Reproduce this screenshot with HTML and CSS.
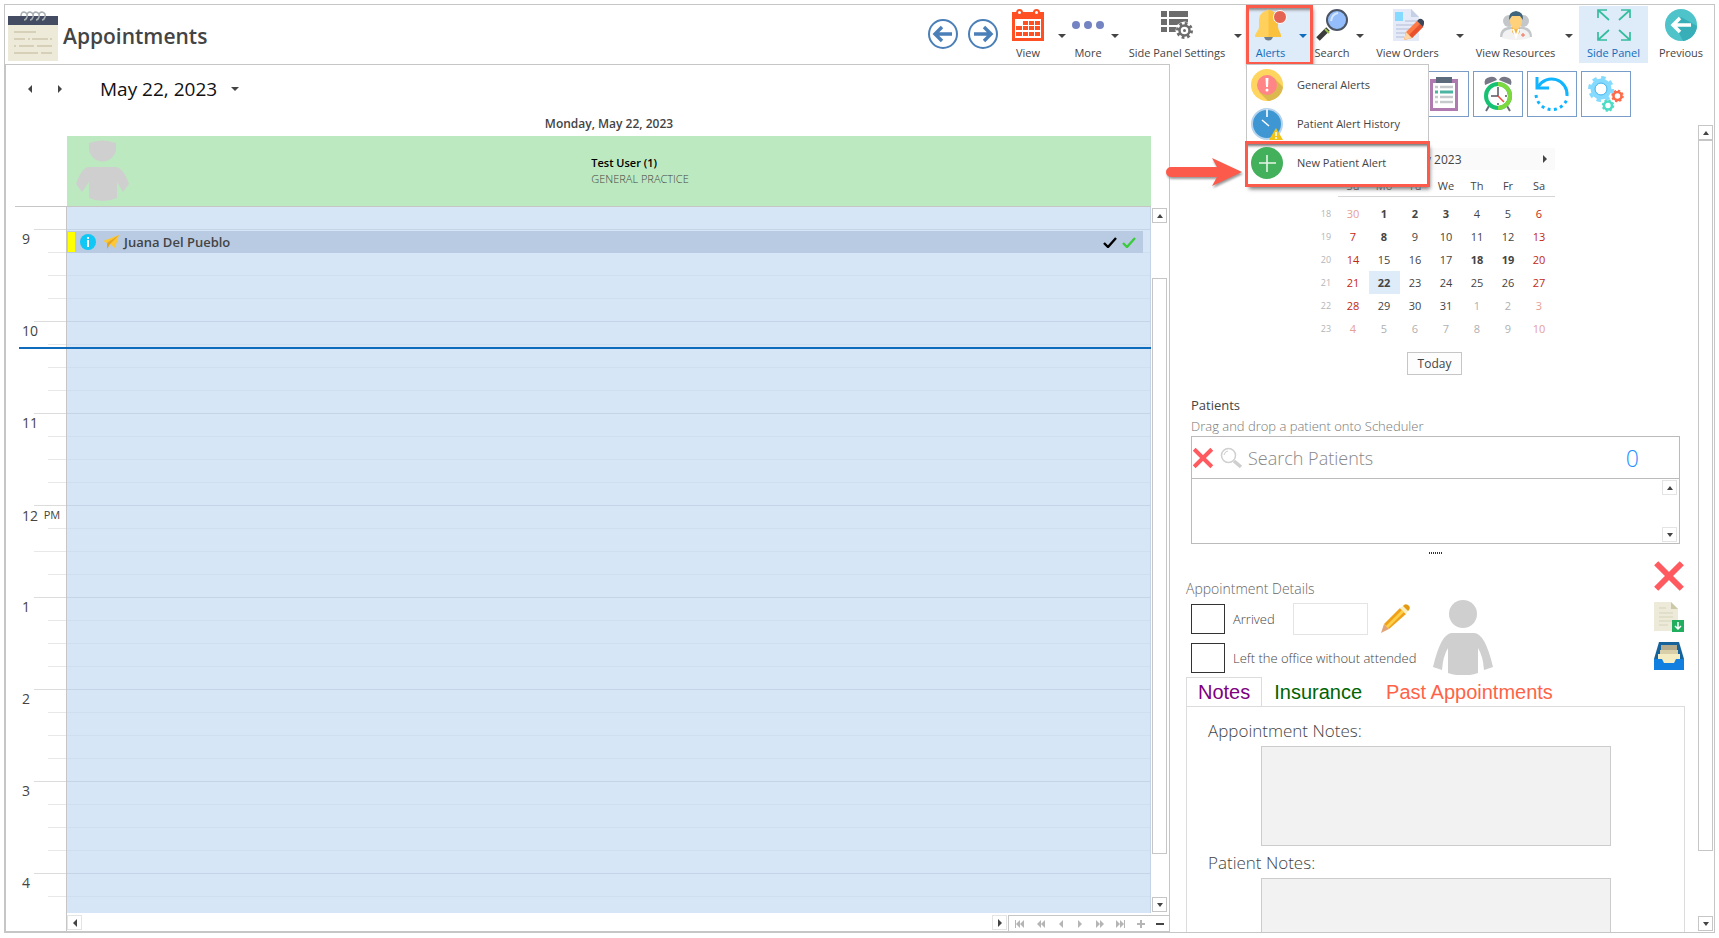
FILE: index.html
```html
<!DOCTYPE html>
<html lang="en">
<head>
    <meta charset="utf-8">
    <title>Appointments</title>
    <link rel="stylesheet" href="styles.css">
</head>
<body>
    <svg class="defs" aria-hidden="true">
        <symbol id="up" viewBox="0 0 8 8"><path d="M4 2l3 4H1z"/></symbol>
        <symbol id="down" viewBox="0 0 8 8"><path d="M4 6L1 2h6z"/></symbol>
        <symbol id="left" viewBox="0 0 8 8"><path d="M2 4l4-4v8z"/></symbol>
        <symbol id="right" viewBox="0 0 8 8"><path d="M6 4L2 0v8z"/></symbol>
        <symbol id="caret" viewBox="0 0 8 4"><path d="M0 0h8L4 4z"/></symbol>
        <symbol id="cross" viewBox="0 0 30 30"><path d="M3 3l24 24M27 3L3 27" fill="none" stroke="#ff5a5f" stroke-width="5.5"/></symbol>
        <symbol id="check" viewBox="0 0 14 11"><path d="M1 6l4 4 8-9" fill="none" stroke="currentColor" stroke-width="2.4"/></symbol>
    </svg>

    <div class="app">
        <header class="header">
            <div class="brand">
                <svg width="50" height="50" viewBox="0 0 50 50">
                    <path d="M0 5h50v45H0z" fill="#edead9"/>
                    <path d="M0 5h50v9H0z" fill="#434c62"/>
                    <g fill="none" stroke="#a9b0b5" stroke-width="1.5">
                        <path d="M13 5q0-4 3-4 4 1 3 5-1 3-3 3M19 5q0-4 3-4 4 1 3 5-1 3-3 3M25 5q0-4 3-4 4 1 3 5-1 3-3 3M31 5q0-4 3-4 4 1 3 5-1 3-3 3"/>
                    </g>
                    <path d="M6 21h22M6 28h11M20 28h2M24 28h16M42 28h2M6 35h2M11 35h15M29 35h15M6 42h24M33 42h11" stroke="#cfc8ae" stroke-width="1.6"/>
                </svg>
                <h1>Appointments</h1>
            </div>
            <nav class="toolbar">
                <button class="round" aria-label="Back">
                    <svg width="32" height="32" viewBox="0 0 32 32" fill="none" stroke="#4a7fb8"><circle cx="16" cy="16" r="14" stroke-width="2"/><path d="M25 16H9M15 9l-7 7 7 7" stroke-width="3.4"/></svg>
                </button>
                <button class="round" aria-label="Forward">
                    <svg width="32" height="32" viewBox="0 0 32 32" fill="none" stroke="#4a7fb8"><circle cx="16" cy="16" r="14" stroke-width="2"/><path d="M7 16h16M17 9l7 7-7 7" stroke-width="3.4"/></svg>
                </button>
                <button class="tool">
                    <svg width="32" height="32" viewBox="0 0 32 32">
                        <path d="M0 3h32v29H0z" fill="#ff5023"/>
                        <path d="M3 10h26v19H3z" fill="#fff"/>
                        <path d="M11 12h5v4h-5zM17 12h5v4h-5zM23 12h5v4h-5zM4 17h6v4H4zM11 17h5v4h-5zM17 17h5v4h-5zM23 17h5v4h-5zM4 23h6v4H4zM11 23h5v4h-5zM17 23h5v4h-5zM23 23h5v4h-5z" fill="#ff5023"/>
                        <circle cx="7.500" cy="3.500" r="2.500" fill="#fff" stroke="#ff5023" stroke-width="2"/>
                        <circle cx="24.500" cy="3.500" r="2.500" fill="#fff" stroke="#ff5023" stroke-width="2"/>
                    </svg>
                    <span>View</span>
                </button>
                <button class="drop" aria-label="View options"><svg width="8" height="4"><use href="#caret"/></svg></button>
                <button class="tool">
                    <svg width="32" height="32" viewBox="0 0 32 32" fill="#7484c2"><circle cx="4" cy="16" r="4"/><circle cx="16" cy="16" r="4"/><circle cx="28" cy="16" r="4"/></svg>
                    <span>More</span>
                </button>
                <button class="drop" aria-label="More options"><svg width="8" height="4"><use href="#caret"/></svg></button>
                <button class="tool">
                    <svg width="32" height="32" viewBox="0 0 32 32">
                        <path d="M0 2h6v6H0zM8 2h19v6H8zM0 10h6v6H0zM8 10h19v6H8zM0 18h6v5H0zM8 18h9v5H8z" fill="#6c6c6c"/>
                        <circle cx="23.500" cy="21.500" r="9" fill="#fff"/>
                        <circle cx="23.500" cy="21.500" r="7" fill="none" stroke="#6c6c6c" stroke-width="3" stroke-dasharray="2.750 2.750"/>
                        <circle cx="23.500" cy="21.500" r="5" fill="none" stroke="#6c6c6c" stroke-width="2.500"/>
                        <circle cx="23.500" cy="21.500" r="1.500" fill="#6c6c6c"/>
                    </svg>
                    <span>Side Panel Settings</span>
                </button>
                <button class="drop" aria-label="Side panel options"><svg width="8" height="4"><use href="#caret"/></svg></button>

                <div class="alerts">
                    <button class="tool">
                        <svg width="32" height="32" viewBox="0 0 32 32">
                            <path d="M9 27h9a4.500 4.500 0 0 1-9 0z" fill="#6f7f8c"/>
                            <path d="M11 2a3 3 0 0 1 5 0c5 1 7 5 7 10v6c0 4 3 5 3 10H0c0-5 4-6 4-10v-6c0-5 2-9 7-10z" fill="#ffd15c"/>
                            <path d="M13.500 1q2 0 2.500 1c5 1 7 5 7 10v6c0 4 3 5 3 10H13.500z" fill="#f9c13e"/>
                            <circle cx="25" cy="8" r="6.500" fill="#e56353" stroke="#fff" stroke-width="1"/>
                        </svg>
                        <span>Alerts</span>
                    </button>
                    <button class="drop" aria-label="Alert options" aria-expanded="true"><svg width="8" height="4"><use href="#caret"/></svg></button>
                    <div class="menu">
                        <button>
                            <svg width="32" height="32" viewBox="0 0 32 32"><circle cx="16" cy="16" r="16" fill="#fdd55f"/><path d="M23 9l9 9a16 16 0 0 1-15 14l-9-9z" fill="#dcb94f"/><circle cx="16" cy="16" r="10" fill="#ff8587"/><path d="M14.500 9h3l-.5 9h-2z" fill="#fff"/><circle cx="16" cy="21" r="1.500" fill="#fff"/></svg>
                            General Alerts
                        </button>
                        <button>
                            <svg width="32" height="32" viewBox="0 0 32 32"><circle cx="16" cy="16" r="15" fill="#3e97d3" stroke="#b5d3ec" stroke-width="2"/><path d="M16 1v8" stroke="#d8e9f7" stroke-width="2"/><path d="M11 12l7 6" stroke="#fff" stroke-width="1.500"/><path d="M25 20l7 12H18z" fill="#f0c419"/><path d="M25 24v4M25 29v2" stroke="#fff" stroke-width="1.500"/></svg>
                            Patient Alert History
                        </button>
                        <button class="marked">
                            <svg width="32" height="32" viewBox="0 0 32 32"><circle cx="16" cy="16" r="16" fill="#43b05c"/><path d="M16 8v17M8 16h17" stroke="#e5f5e8" stroke-width="1.600"/></svg>
                            New Patient Alert
                        </button>
                        <svg class="pointer" width="80" height="32" viewBox="0 0 80 32"><path d="M6 10h46L47 1l30 14-30 14 5-9H6a5 5 0 0 1 0-10z" fill="#fc5a4b"/></svg>
                    </div>
                </div>

                <button class="tool">
                    <svg width="32" height="32" viewBox="0 0 32 32"><path d="M2 30l10-10" stroke="#3c3c3c" stroke-width="5"/><path d="M9 20l4 4" stroke="#9bc24a" stroke-width="2"/><circle cx="21" cy="11" r="10" fill="#94befb" stroke="#4b5563" stroke-width="2"/><path d="M15 12q1-7 7-8" fill="none" stroke="#d5e6ff" stroke-width="2"/></svg>
                    <span>Search</span>
                </button>
                <button class="drop" aria-label="Search options"><svg width="8" height="4"><use href="#caret"/></svg></button>
                <button class="tool">
                    <svg width="32" height="32" viewBox="0 0 32 32"><path d="M1 0h18l8 8v24H1z" fill="#e4eaf8"/><path d="M19 0l8 8h-8z" fill="#c5d0e6"/><path d="M3 3h8v9H3z" fill="#84dbff"/><path d="M13 12h12M4 16h20M4 20h15M4 24h10M4 28h8" stroke="#c3ccdf" stroke-width="1.500"/><path d="M12 31l2-8 11-11 6 6-11 11z" fill="#ff7a45"/><path d="M17 26l11-11 3 3-11 11z" fill="#e8502e"/><path d="M25 12l2-2q2-1 4 1t1 4l-1 3z" fill="#3d4757"/><path d="M12 31l2-8 6 6z" fill="#fbd7a5"/></svg>
                    <span>View Orders</span>
                </button>
                <button class="drop" aria-label="Order options"><svg width="8" height="4"><use href="#caret"/></svg></button>
                <button class="tool">
                    <svg width="32" height="32" viewBox="0 0 32 32"><g fill="#c3c7ca"><circle cx="9" cy="12" r="6"/><circle cx="23" cy="12" r="6"/><path d="M0 28q0-9 8-10h16q8 1 8 10z"/></g><path d="M2 29q0-8 9-9h11q8 1 8 9-14 4-28 0z" fill="#f2f2f2"/><path d="M12 17h8v6l-4 5-4-5z" fill="#f4b548"/><ellipse cx="16" cy="12" rx="6" ry="8" fill="#ffd17b"/><path d="M9 11q-1-8 7-9 8 1 7 9l-3-4h-8z" fill="#41657c"/><path d="M13 20l3 8 3-8" fill="none" stroke="#fff" stroke-width="2"/><path d="M23 24v4M21 26h4" stroke="#f06c55"/></svg>
                    <span>View Resources</span>
                </button>
                <button class="drop" aria-label="Resource options"><svg width="8" height="4"><use href="#caret"/></svg></button>
                <button class="tool active">
                    <svg width="34" height="32" viewBox="0 0 34 32" fill="none" stroke="#35bd9f" stroke-width="1.700"><path d="M1 9V1h9M1 1l11 10M24 1h9v8M33 1L22 11M1 23v8h9M1 31l11-10M24 31h9v-8M33 31L22 21"/></svg>
                    <span>Side Panel</span>
                </button>
                <button class="tool">
                    <svg width="32" height="32" viewBox="0 0 32 32"><circle cx="16" cy="16" r="16" fill="#4ec3c9"/><path d="M16 8l16 9a16 16 0 0 1-14 15l-8-16z" fill="#38afb8"/><path d="M26 16H9M15 9l-7 7 7 7" fill="none" stroke="#fff" stroke-width="3.500"/></svg>
                    <span>Previous</span>
                </button>
            </nav>
        </header>

        <main class="main">
            <section class="schedule">
                <div class="datebar">
                    <button aria-label="Previous day"><svg width="8" height="8"><use href="#left"/></svg></button>
                    <button aria-label="Next day"><svg width="8" height="8"><use href="#right"/></svg></button>
                    <button class="date">May 22, 2023 <svg width="8" height="4"><use href="#caret"/></svg></button>
                </div>
                <div class="dayname">Monday, May 22, 2023</div>
                <div class="resource">
                    <div class="resource-card">
                        <svg width="54" height="62" viewBox="0 0 54 62" fill="#cfcfcf"><path d="M14 3q13-5 27 0v5a13.500 13.500 0 0 1-27 0z"/><path d="M14 27h26q8 0 14 17l-6 8-6-10v16q-14 6-28 0V42L7 52 1 44q6-17 13-17z"/></svg>
                        <div class="resource-name">
                            <strong>Test User (1)</strong>
                            <span>GENERAL PRACTICE</span>
                        </div>
                    </div>
                </div>
                <div class="timegrid">
                    <div class="ruler">
                        <div class="hour">9</div>
                        <div class="hour">10</div>
                        <div class="hour">11</div>
                        <div class="hour noon">12 <small>PM</small></div>
                        <div class="hour">1</div>
                        <div class="hour">2</div>
                        <div class="hour">3</div>
                        <div class="hour">4</div>
                    </div>
                    <div class="day">
                        <div class="appointment">
                            <svg width="16" height="16" viewBox="0 0 16 16"><circle cx="8" cy="8" r="8" fill="#10c7f5"/><path d="M8 3v2M8 6v7" stroke="#fff" stroke-width="2"/></svg>
                            <svg width="16" height="16" viewBox="0 0 16 16"><path d="M0 7l16-6-4 13-5-4-3 5V9z" fill="#fbc736"/><path d="M4 9l12-8-9 9-3 5z" fill="#e3a41e"/></svg>
                            <strong>Juana Del Pueblo</strong>
                            <svg class="check-black" width="14" height="11"><use href="#check"/></svg>
                            <svg class="check-green" width="14" height="11"><use href="#check"/></svg>
                        </div>
                    </div>
                    <div class="vscroll">
                        <button aria-label="Scroll up"><svg width="8" height="8"><use href="#up"/></svg></button>
                        <div class="thumb"></div>
                        <button aria-label="Scroll down"><svg width="8" height="8"><use href="#down"/></svg></button>
                    </div>
                    <div class="now"></div>
                </div>
                <div class="footer">
                    <div class="hscroll">
                        <button aria-label="Scroll left"><svg width="8" height="8"><use href="#left"/></svg></button>
                        <button aria-label="Scroll right"><svg width="8" height="8"><use href="#right"/></svg></button>
                    </div>
                    <div class="pager">
                        <button aria-label="First"><svg width="10" height="8" viewBox="0 0 10 8"><path d="M0 0h1v8H0zM1 4l4-4v8zM5 4l4-4v8z"/></svg></button>
                        <button aria-label="Previous page"><svg width="10" height="8" viewBox="0 0 10 8"><path d="M1 4l4-4v8zM5 4l4-4v8z"/></svg></button>
                        <button aria-label="Previous"><svg width="8" height="8"><use href="#left"/></svg></button>
                        <button aria-label="Next"><svg width="8" height="8"><use href="#right"/></svg></button>
                        <button aria-label="Next page"><svg width="10" height="8" viewBox="0 0 10 8"><path d="M5 4L1 0v8zM9 4L5 0v8z"/></svg></button>
                        <button aria-label="Last"><svg width="10" height="8" viewBox="0 0 10 8"><path d="M4 4L0 0v8zM8 4L4 0v8zM8 0h1v8H8z"/></svg></button>
                        <button aria-label="Add"><svg width="8" height="8" viewBox="0 0 8 8"><path d="M3 0h2v3h3v2H5v3H3V5H0V3h3z"/></svg></button>
                        <button class="enabled" aria-label="Remove"><svg width="8" height="8" viewBox="0 0 8 8"><path d="M0 3h8v2H0z"/></svg></button>
                    </div>
                </div>
            </section>

            <aside class="side">
                <div class="side-content">
                    <div class="quick">
                        <button aria-label="Tasks">
                            <svg width="36" height="36" viewBox="0 0 36 36"><path d="M4 3h28v32H4z" fill="#ae7ab0"/><path d="M7 7h22v25H7z" fill="#fff"/><path d="M10 1h16v6H10z" fill="#5b6b7c"/><path d="M9 11h3M14 11h13M9 21h3M14 21h13M9 26h3M14 26h13" stroke="#c6cacc" stroke-width="2.500"/><path d="M9 16h3M14 16h13" stroke="#4cb5a2" stroke-width="3"/></svg>
                        </button>
                        <button aria-label="Reminders">
                            <svg width="36" height="36" viewBox="0 0 36 36"><path d="M9 30l-3 5M27 30l3 5" stroke="#6a6a78" stroke-width="2"/><path d="M5 9q-2-7 5-8 5-1 7 3zM31 9q2-7-5-8-5-1-7 3z" fill="#777786"/><circle cx="18" cy="20" r="12" fill="#fff" stroke="#16c172" stroke-width="4"/><path d="M18 8a12 12 0 0 1 0 24" fill="none" stroke="#7ed83f" stroke-width="4"/><path d="M18 11v9h-7M18 29v-2M27 20h-2" fill="none" stroke="#555566" stroke-width="1.500"/><path d="M18 20l6 6" stroke="#ef4b3f" stroke-width="1.500"/></svg>
                        </button>
                        <button aria-label="Refresh">
                            <svg width="36" height="36" viewBox="0 0 36 36" fill="none" stroke="#11b4ff" stroke-width="3"><path d="M3 1v11h12"/><path d="M4 11a15.500 15.500 0 0 1 29 9"/><path d="M2 19a16 16 0 0 0 31 4" stroke-dasharray="3 3.400"/></svg>
                        </button>
                        <button aria-label="Settings">
                            <svg width="36" height="36" viewBox="0 0 36 36" fill="none"><circle cx="13" cy="13" r="8" stroke="#84dbff" stroke-width="5"/><circle cx="13" cy="13" r="11.500" stroke="#84dbff" stroke-width="3" stroke-dasharray="4.500 4.500"/><circle cx="13" cy="13" r="6" stroke="#4fb8ea" stroke-width="1"/><circle cx="29.500" cy="20" r="4" stroke="#fd6b4b" stroke-width="2.600"/><circle cx="29.500" cy="20" r="5.500" stroke="#fd6b4b" stroke-width="1.500" stroke-dasharray="2.200 2.100"/><circle cx="20" cy="29.500" r="4" stroke="#4cdbc4" stroke-width="2.600"/><circle cx="20" cy="29.500" r="5.500" stroke="#4cdbc4" stroke-width="1.500" stroke-dasharray="2.200 2.100"/></svg>
                        </button>
                    </div>

                    <div class="calendar">
                        <div class="month">
                            <span>May 2023</span>
                            <button aria-label="Next month"><svg width="8" height="8"><use href="#right"/></svg></button>
                        </div>
                        <table>
                            <thead>
                                <tr><td></td><th>Su</th><th>Mo</th><th>Tu</th><th>We</th><th>Th</th><th>Fr</th><th>Sa</th></tr>
                            </thead>
                            <tbody>
                                <tr><td>18</td><td class="other">30</td><td class="busy">1</td><td class="busy">2</td><td class="busy">3</td><td>4</td><td>5</td><td>6</td></tr>
                                <tr><td>19</td><td>7</td><td class="busy">8</td><td>9</td><td>10</td><td>11</td><td>12</td><td>13</td></tr>
                                <tr><td>20</td><td>14</td><td>15</td><td>16</td><td>17</td><td class="busy">18</td><td class="busy">19</td><td>20</td></tr>
                                <tr><td>21</td><td>21</td><td class="busy selected">22</td><td>23</td><td>24</td><td>25</td><td>26</td><td>27</td></tr>
                                <tr><td>22</td><td>28</td><td>29</td><td>30</td><td>31</td><td class="other">1</td><td class="other">2</td><td class="other">3</td></tr>
                                <tr><td>23</td><td class="other">4</td><td class="other">5</td><td class="other">6</td><td class="other">7</td><td class="other">8</td><td class="other">9</td><td class="other">10</td></tr>
                            </tbody>
                        </table>
                        <button class="today">Today</button>
                    </div>

                    <div class="patients">
                        <h2>Patients</h2>
                        <label for="patient_search">Drag and drop a patient onto Scheduler</label>
                        <div class="searchbox">
                            <button aria-label="Clear"><svg width="22" height="22"><use href="#cross"/></svg></button>
                            <svg width="22" height="22" viewBox="0 0 22 22" fill="none" stroke="#cfcfcf"><circle cx="8.500" cy="8.500" r="7" stroke-width="1.500"/><path d="M4 8q1-4 4-4" stroke-width="1"/><path d="M14 14l7 6" stroke-width="3.500"/></svg>
                            <input type="text" id="patient_search" placeholder="Search Patients">
                            <span class="count">0</span>
                        </div>
                        <div class="results">
                            <button aria-label="Scroll results up"><svg width="8" height="8"><use href="#up"/></svg></button>
                            <button aria-label="Scroll results down"><svg width="8" height="8"><use href="#down"/></svg></button>
                        </div>
                        <div class="grip"></div>
                    </div>

                    <div class="details">
                        <div class="fields">
                            <h3>Appointment Details</h3>
                            <div class="field">
                                <input type="checkbox" id="arrived">
                                <label for="arrived">Arrived</label>
                                <input class="time" type="text" aria-label="Arrival time">
                                <button aria-label="Edit">
                                    <svg width="30" height="30" viewBox="0 0 30 30"><path d="M1 29l3-9 5 5z" fill="#e0a57b"/><path d="M4 20L20 4l6 6L9 25z" fill="#f0a11a"/><path d="M6 22L22 6l2 2L8 24z" fill="#ffd04a"/><path d="M20 4l3-2 5 5-2 3z" fill="#f7efc0"/><path d="M23 2q2-3 5-1t1 5l-1 1z" fill="#e39a10"/></svg>
                                </button>
                            </div>
                            <div class="field">
                                <input type="checkbox" id="left_office">
                                <label for="left_office">Left the office without attended</label>
                            </div>
                        </div>
                        <svg class="avatar" width="62" height="75" viewBox="0 0 62 75" fill="#cfcfcf"><circle cx="31" cy="14" r="14"/><path d="M20 33h22q11 0 19 34l-9 3q-1-14-6-22v25q-15 5-30 0V48q-5 8-6 22l-9-3q8-34 19-34z"/></svg>
                        <div class="actions">
                            <button aria-label="Delete"><svg width="32" height="32"><use href="#cross"/></svg></button>
                            <button aria-label="Download">
                                <svg width="30" height="30" viewBox="0 0 30 30"><path d="M0 0h17l7 7v22H0z" fill="#edead9"/><path d="M17 0l7 7h-7z" fill="#cdc9a8"/><path d="M5 6h7M5 11h14M5 15h14M5 19h14M5 23h9" stroke="#d5d1bc" stroke-width="1.200"/><path d="M18 18h12v12H18z" fill="#21ae5e"/><path d="M24 20v7M21 24l3 3 3-3" fill="none" stroke="#fff" stroke-width="1.500"/></svg>
                            </button>
                            <button aria-label="Inbox">
                                <svg width="30" height="28" viewBox="0 0 30 28"><path d="M5 0h20l5 17H0z" fill="#16639b"/><path d="M7 3h16v8H7z" fill="#b3ab8c"/><path d="M6 8h18v9H6z" fill="#d8cfa8"/><path d="M4 12h22v10H4z" fill="#f4edc4"/><path d="M0 17h8l2 4h10l2-4h8v11H0z" fill="#117fe0"/></svg>
                            </button>
                        </div>
                    </div>

                    <div class="tabs">
                        <button class="tab-notes">Notes</button>
                        <button class="tab-insurance">Insurance</button>
                        <button class="tab-past">Past Appointments</button>
                    </div>
                    <div class="pane">
                        <label for="appointment_notes">Appointment Notes:</label>
                        <textarea id="appointment_notes"></textarea>
                        <label for="patient_notes">Patient Notes:</label>
                        <textarea id="patient_notes"></textarea>
                    </div>
                </div>
                <div class="vscroll side-scroll">
                    <button aria-label="Scroll panel up"><svg width="8" height="8"><use href="#up"/></svg></button>
                    <div class="thumb"></div>
                    <button aria-label="Scroll panel down"><svg width="8" height="8"><use href="#down"/></svg></button>
                </div>
            </aside>
        </main>
    </div>
</body>
</html>
```
FILE: styles.css
```css
* {
    box-sizing: border-box;
}

body {
    margin: 0;
    padding: 4px;
    height: 100vh;
    overflow: hidden;
    font-family: "Open Sans", "Noto Sans", sans-serif;
    font-size: 11px;
    color: #444;
    fill: currentColor;
    background-color: #fff;
}

h1, h2, h3 {
    margin: 0;
}

button {
    padding: 0;
    border: none;
    background: none;
    font: inherit;
    color: inherit;
    cursor: pointer;
}

svg {
    display: block;
    flex: none;
}

.defs {
    position: absolute;
    width: 0;
    height: 0;
}

.app {
    display: flex;
    flex-direction: column;
    height: calc(100vh - 9px);
    border: 1px solid #c6c6c6;
}

/* header */
.header {
    display: flex;
    justify-content: space-between;
    height: 59px;
    flex: none;
}

.brand {
    display: flex;
    align-items: center;
    gap: 5px;
    padding: 2px 0 0 3px;
}

.brand h1 {
    font-size: 21px;
    font-weight: 600;
}

.toolbar {
    display: grid;
    grid-template-columns: 40px 40px 50px 18px 34px 20px 104px 18px 65px 40px 16px 79px 26px 85px 21px 69px 66px;
    padding-top: 1px;
}

.round {
    display: flex;
    justify-content: center;
    padding-top: 12px;
}

.tool {
    display: flex;
    flex-direction: column;
    align-items: center;
    gap: 3px;
    height: 57px;
    padding-top: 3px;
    white-space: nowrap;
}

.tool span {
    line-height: 18px;
}

.drop {
    display: flex;
    justify-content: center;
    padding-top: 28px;
}

.active {
    background-color: #deebf8;
    color: #0f6cbd;
}

.alerts {
    position: relative;
    display: grid;
    grid-template-columns: 47px 1fr;
    height: 58px;
    background-color: #deebf8;
    color: #0f6cbd;
    outline: 3px solid #fc5a4b;
    outline-offset: -2px;
    box-shadow: 1px 3px 4px #777, inset 0 5px 3px -1px #888;
}

.menu {
    position: absolute;
    z-index: 2;
    top: 58px;
    left: -1px;
    width: 183px;
    background-color: #fff;
    border: 1px solid #c6c6c6;
    color: #444;
}

.menu button {
    display: flex;
    align-items: center;
    gap: 14px;
    width: 100%;
    height: 39px;
    padding-left: 4px;
}

.menu .marked {
    height: 42px;
    padding-bottom: 3px;
    outline: 3px solid #fc5a4b;
    outline-offset: -1px;
    box-shadow: 2px 4px 4px #777, inset 0 5px 3px -2px #777;
}

.pointer {
    position: absolute;
    left: -82px;
    bottom: -4px;
    filter: drop-shadow(1px 2px 1px #999);
}

/* schedule */
.main {
    display: grid;
    grid-template-columns: 1fr 544px;
    flex: 1;
    min-height: 0;
}

.schedule {
    display: flex;
    flex-direction: column;
    min-height: 0;
    border: 1px solid #c6c6c6;
}

.datebar {
    display: flex;
    align-items: center;
    gap: 22px;
    height: 47px;
    padding-left: 20px;
}

.date {
    display: flex;
    align-items: center;
    gap: 14px;
    margin-left: 14px;
    font-size: 19px;
    color: #111;
}

.date svg {
    color: #444;
}

.dayname {
    height: 24px;
    padding: 0 18px 0 61px;
    line-height: 24px;
    text-align: center;
    font-size: 12px;
    font-weight: 600;
}

.resource {
    padding: 0 18px 0 9px;
    flex: none;
}

.resource-card {
    position: relative;
    display: flex;
    align-items: center;
    justify-content: center;
    height: 70px;
    margin-left: 52px;
    background-color: #bce9bf;
}

.resource::after {
    content: "";
    display: block;
    height: 1px;
    background-color: #c6c6c6;
}

.resource-card > svg {
    position: absolute;
    left: 8px;
    top: 4px;
}

.resource-name {
    display: flex;
    flex-direction: column;
    line-height: 16px;
    padding-left: 62px;
    font-weight: 300;
}

.resource-name strong {
    font-weight: 600;
    color: #000;
}

.timegrid {
    position: relative;
    display: grid;
    grid-template-columns: 61px 1fr 18px;
    flex: 1;
    min-height: 0;
    overflow: hidden;
}

.ruler {
    padding: 22px 0 0 16px;
    border-right: 1px solid #c6c6c6;
    overflow: hidden;
}

.hour {
    height: 92px;
    line-height: 20px;
    font-size: 14px;
    background-image: linear-gradient(#dcdcdc, #dcdcdc), linear-gradient(#e8e8e8, #e8e8e8), linear-gradient(#e8e8e8, #e8e8e8), linear-gradient(#e8e8e8, #e8e8e8);
    background-size: 32px 1px, 18px 1px, 18px 1px, 18px 1px;
    background-position: right 0, right 23px, right 46px, right 69px;
    background-repeat: no-repeat;
}

.noon {
    background-size: 32px 1px, 18px 1px, 32px 1px, 18px 1px;
}

.hour small {
    margin-left: 2px;
    font-size: 11px;
    vertical-align: 2px;
}

.day {
    padding: 24px 7px 0 0;
    border-right: 1px solid #c5d4e6;
    background-color: #d7e6f6;
    background-image: linear-gradient(#c5d4e6 1px, transparent 1px), linear-gradient(#cfdfef 1px, transparent 1px);
    background-size: 100% 92px, 100% 23px;
    background-position: 0 22px;
}

.appointment {
    display: flex;
    align-items: center;
    gap: 5px;
    height: 22px;
    padding: 0 6px 0 8px;
    background-color: #b8cbe3;
    border: 1px solid #b8cbe3;
    box-shadow: inset 7px 0 #ff0;
    font-size: 13px;
}

.appointment strong {
    font-weight: 600;
}

.appointment svg:first-child {
    margin: 0 2px 0 4px;
}

.check-black {
    margin-left: auto;
    color: #000;
}

.check-green {
    color: #3ccb3c;
}

.vscroll {
    display: flex;
    flex-direction: column;
    padding: 1px;
    min-height: 0;
}

.vscroll button, .hscroll button, .results button {
    display: flex;
    align-items: center;
    justify-content: center;
    width: 15px;
    height: 15px;
    flex: none;
    border: 1px solid #c6c6c6;
}

.hscroll button, .results button {
    border-color: #e4e4e4;
}

.vscroll .thumb {
    width: 15px;
    flex: 577;
    margin-top: 55px;
    border: 1px solid #c6c6c6;
}

.vscroll .thumb + button {
    margin-top: 43px;
}

.now {
    position: absolute;
    top: 140px;
    left: 13px;
    right: 18px;
    height: 2px;
    background-color: #0f6cbd;
}

.footer {
    display: flex;
    height: 18px;
    flex: none;
    margin-left: 60px;
    border-left: 1px solid #c6c6c6;
}

.hscroll {
    display: flex;
    justify-content: space-between;
    flex: 1;
    padding: 2px 1px 0 0;
}

.pager {
    display: flex;
    align-items: center;
    justify-content: space-around;
    width: 161px;
    margin-top: 2px;
    border: 1px solid #c6c6c6;
    border-width: 1px 0 0 1px;
    color: #b5b5b5;
}

.enabled {
    color: #444;
}

/* side panel */
.side {
    display: grid;
    grid-template-columns: 1fr 16px;
    min-height: 0;
}

.side-content {
    display: flex;
    flex-direction: column;
    min-height: 0;
    overflow: hidden;
    padding: 7px 13px 0 16px;
}

.quick {
    display: flex;
    justify-content: flex-end;
    gap: 4px;
    padding-right: 54px;
    margin-bottom: 31px;
}

.quick button {
    display: flex;
    align-items: center;
    justify-content: center;
    width: 50px;
    height: 46px;
    border: 1px solid #7a9cc9;
}

.calendar {
    align-self: center;
    width: 240px;
    margin-right: 2px;
    display: flex;
    flex-direction: column;
    align-items: center;
}

.month {
    display: flex;
    align-items: center;
    justify-content: center;
    position: relative;
    width: 100%;
    height: 22px;
    background-color: #fafafa;
    font-size: 12px;
}

.month button {
    position: absolute;
    right: 6px;
}

.calendar table {
    width: 100%;
    table-layout: fixed;
    border-collapse: collapse;
    text-align: center;
}

.calendar th, .calendar td {
    height: 23px;
    padding: 0;
    font-weight: 400;
}

.calendar thead td {
    width: 23px;
}

.calendar th {
    height: 26px;
    padding-top: 6px;
    border-bottom: 1px solid #d5d5d5;
}

.calendar tbody::before {
    content: "";
    display: block;
    height: 6px;
}

.calendar tbody td:first-child {
    font-size: 9px;
    color: #b5b5b5;
}

.calendar tbody td:nth-child(2), .calendar tbody td:last-child {
    color: #c22711;
}

.calendar tbody td.busy {
    font-weight: 700;
}

.calendar tbody td.selected {
    background-color: #deebf8;
}

.calendar tbody td.other {
    color: #b0b0b0;
}

.calendar tbody td.other:nth-child(2), .calendar tbody td.other:last-child {
    color: #e6a096;
}

.today {
    width: 55px;
    height: 23px;
    margin-top: 12px;
    border: 1px solid #c6c6c6;
    background-color: #fdfdfd;
    font-size: 12px;
}

.patients {
    margin: 18px 5px 0 5px;
}

.patients h2 {
    font-size: 13px;
    font-weight: 400;
    line-height: 24px;
}

.patients label {
    display: block;
    font-size: 13px;
    font-weight: 300;
    line-height: 19px;
    color: #777;
}

.searchbox {
    display: flex;
    align-items: center;
    gap: 6px;
    height: 43px;
    border: 1px solid #bbb;
}

.searchbox input {
    flex: 1;
    min-width: 0;
    padding: 0;
    border: none;
    background: none;
    font: 300 18px "Open Sans", sans-serif;
}

.searchbox input::placeholder {
    color: #888;
}

.count {
    padding-right: 40px;
    font-size: 23px;
    font-weight: 300;
    color: #1e90ff;
}

.results {
    display: flex;
    flex-direction: column;
    justify-content: space-between;
    align-items: flex-end;
    height: 65px;
    padding: 1px 2px;
    border: 1px solid #bbb;
    border-top: none;
}

.grip {
    width: 14px;
    height: 2px;
    margin: 8px auto 0;
    background-image: repeating-linear-gradient(90deg, #333 0 1px, transparent 1px 2px);
}

.details {
    display: flex;
    height: 123px;
    flex: none;
}

.details h3 {
    padding-top: 24px;
    font-size: 14px;
    font-weight: 300;
    line-height: 21px;
    color: #666;
}

.fields {
    width: 230px;
    white-space: nowrap;
}

.field {
    display: flex;
    align-items: center;
    height: 39px;
    padding-left: 5px;
    font-size: 13px;
    font-weight: 300;
}

.field label {
    margin-left: 8px;
}

.field input[type="checkbox"] {
    appearance: none;
    flex: none;
    width: 34px;
    height: 30px;
    margin: 0;
    border: 1px solid #333;
}

.time {
    width: 75px;
    height: 32px;
    margin: 0 12px 0 auto;
    border: 1px solid #e4e4e4;
}

.field button {
    margin-right: 6px;
}

.avatar {
    margin: 46px 0 0 16px;
}

.actions {
    display: flex;
    flex-direction: column;
    align-items: center;
    gap: 10px;
    margin: 6px 0 0 auto;
}

.tabs {
    display: flex;
    height: 30px;
    flex: none;
    margin-bottom: -1px;
    font-family: "Liberation Sans", Arial, sans-serif;
    font-size: 20px;
}

.tabs button {
    padding: 0 12px;
}

.tabs .tab-notes {
    padding: 0 11px;
    border: 1px solid #dcdcdc;
    border-bottom: none;
    background-color: #fff;
    color: #800080;
}

.tab-insurance {
    color: #006400;
}

.tab-past {
    color: #ff6347;
}

.pane {
    flex: 1;
    min-height: 0;
    padding: 12px 21px 0;
    border: 1px solid #dcdcdc;
    border-bottom: none;
}

.pane label {
    display: block;
    font-size: 17px;
    font-weight: 300;
    line-height: 24px;
}

.pane textarea {
    display: block;
    width: 350px;
    height: 100px;
    margin: 3px auto 5px 53px;
    border: 1px solid #ccc;
    background-color: #f2f2f2;
    resize: none;
}

.side-scroll {
    padding: 61px 0 1px;
}

.side-scroll .thumb {
    flex: 1;
    margin-top: 0;
}

.side-scroll .thumb + button {
    margin-top: 65px;
}
```
